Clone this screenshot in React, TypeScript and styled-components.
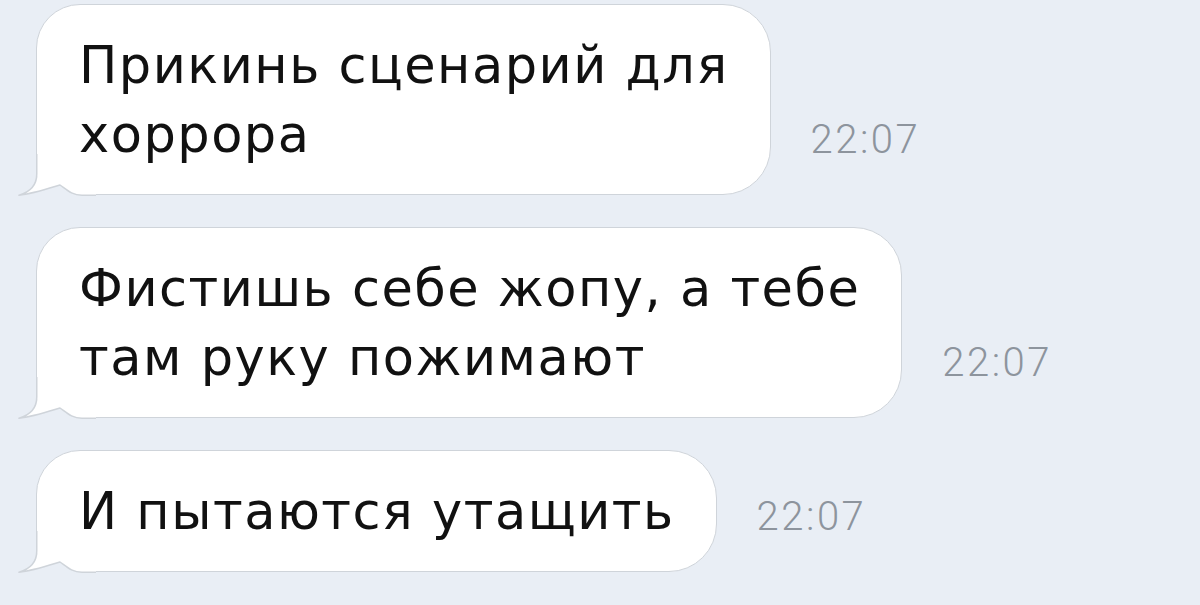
import React from 'react';
import styled, { createGlobalStyle } from 'styled-components';

const GlobalStyle = createGlobalStyle`
  html, body {
    margin: 0;
    padding: 0;
    background: #e9eef5;
  }
  body {
    font-family: "Liberation Sans", Arial, sans-serif;
    -webkit-font-smoothing: antialiased;
  }
`;

const Chat = styled.div`
  width: 1200px;
  height: 605px;
  box-sizing: border-box;
  padding: 4px 0 0 36px;
  display: flex;
  flex-direction: column;
  gap: 32px;
  overflow: hidden;
  background: #e9eef5;
`;

const Row = styled.div`
  display: flex;
  align-items: flex-end;
  gap: 40px;
`;

const Bubble = styled.div`
  position: relative;
  box-sizing: border-box;
  background: #ffffff;
  border: 1.5px solid #cfd4da;
  border-radius: 44px 48px 48px 0;
  padding: 26px 41px 25px 42px;
  color: #111111;
  font-family: "DejaVu Sans", "Liberation Sans", sans-serif;
  font-size: 51px;
  line-height: 69px;
  letter-spacing: 1.5px;
  white-space: nowrap;
`;

const Line = styled.span`
  display: block;
`;

const TailSvg = styled.svg`
  position: absolute;
  left: -21.5px;
  bottom: -1.5px;
  width: 80px;
  height: 42px;
  overflow: visible;
`;

const Time = styled.span`
  font-family: Roboto, "Liberation Sans", sans-serif;
  font-size: 40px;
  line-height: 40px;
  font-weight: 300;
  color: #8d949d;
  margin-bottom: 35px;
  letter-spacing: 2.5px;
`;

const Tail: React.FC = () => (
  <TailSvg viewBox="0 0 80 42">
    <rect x="20" y="22" width="50" height="20" fill="#e9eef5" />
    <path
      d="M21.5 0 L21.5 20 C21.5 31 14 38 3 41.2 C16 40 31 35 44 31 C51 36 56 41.25 66 41.25 L80 41.25 L80 0 Z"
      fill="#ffffff"
    />
    <path
      d="M20.75 0 L20.75 20 C20.75 31 14 38 3 41.2 C16 40 31 35 44 31 C51 36 56 41.25 66 41.25 L80 41.25"
      fill="none"
      stroke="#cfd4da"
      strokeWidth="1.5"
      strokeLinejoin="round"
    />
  </TailSvg>
);

interface Message {
  lines: string[];
  time: string;
}

const messages: Message[] = [
  { lines: ['Прикинь сценарий для', 'хоррора'], time: '22:07' },
  { lines: ['Фистишь себе жопу, а тебе', 'там руку пожимают'], time: '22:07' },
  { lines: ['И пытаются утащить'], time: '22:07' },
];

const App: React.FC = () => {
  return (
    <>
      <GlobalStyle />
      <Chat>
        {messages.map((msg, i) => (
          <Row key={i}>
            <Bubble>
              {msg.lines.map((line, j) => (
                <Line key={j}>{line}</Line>
              ))}
              <Tail />
            </Bubble>
            <Time>{msg.time}</Time>
          </Row>
        ))}
      </Chat>
    </>
  );
};

export default App;
